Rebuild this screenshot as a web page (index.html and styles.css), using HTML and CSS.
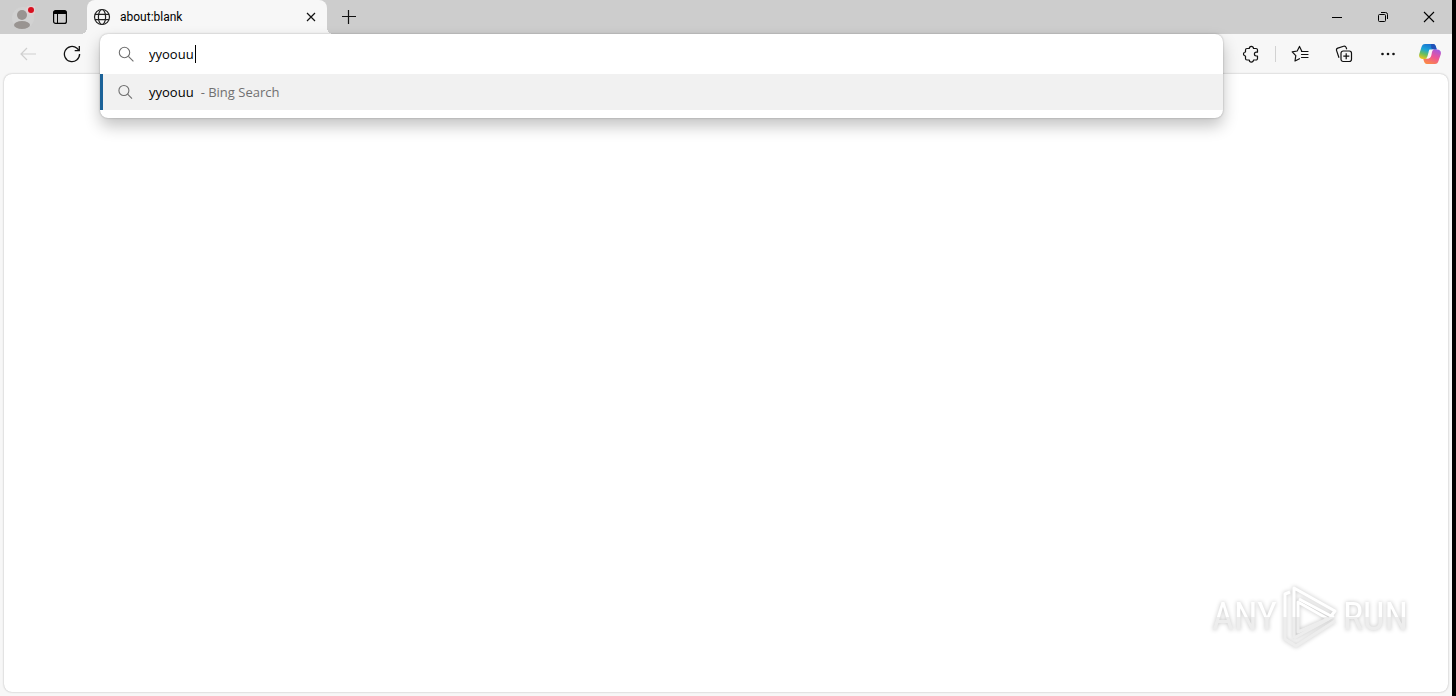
FILE: index.html
```html
<!DOCTYPE html>
<html lang="en">
<head>
  <meta charset="UTF-8">
  <meta name="viewport" content="width=device-width, initial-scale=1.0">
  <title>about:blank</title>
  <link rel="stylesheet" href="styles.css">
</head>
<body>
  <div class="browser">
    <header class="titlebar">
      <button class="profile" aria-label="Profile">
        <svg width="24" height="24" viewBox="0 0 24 24">
          <circle cx="12" cy="12" r="11" fill="#d2d2d2"/>
          <circle cx="11" cy="9" r="5" fill="#999491"/>
          <ellipse cx="11" cy="19" rx="8" ry="4" fill="#999491"/>
          <circle cx="20" cy="4" r="5" fill="#e2cfd0"/>
          <circle cx="20" cy="4" r="3" fill="#d80f1f"/>
        </svg>
      </button>
      <button class="tab-actions" aria-label="Tab actions menu">
        <svg width="16" height="16" viewBox="0 0 16 16">
          <rect x="1.6" y="1.6" width="12.8" height="12.8" rx="2" fill="none" stroke="#000" stroke-width="1.2"/>
          <path d="M1.5 5V3.5a2 2 0 0 1 2-2h9a2 2 0 0 1 2 2V5z"/>
          <path d="M5.5 5v9" stroke="#000"/>
        </svg>
      </button>
      <div class="tab">
        <svg width="18" height="18" viewBox="0 0 18 18" fill="none" stroke="#222" stroke-width="1.2">
          <circle cx="9" cy="9" r="7.5"/>
          <ellipse cx="9" cy="9" rx="3.6" ry="7.5"/>
          <path d="M2 6.4h14M2 11.6h14"/>
        </svg>
        <span class="tab-title">about:blank</span>
        <button class="tab-close" aria-label="Close tab">
          <svg width="10" height="10" viewBox="0 0 10 10" stroke="#111" stroke-width="1.2"><path d="M1 1l8 8M9 1L1 9"/></svg>
        </button>
      </div>
      <button class="new-tab" aria-label="New tab">
        <svg width="16" height="16" viewBox="0 0 16 16" stroke="#111" stroke-width="1.2"><path d="M1 7.5h14M7.5 1v14"/></svg>
      </button>
      <div class="window-controls">
        <button aria-label="Minimize">
          <svg width="12" height="12" viewBox="0 0 12 12" stroke="#000"><path d="M1 6.5h10"/></svg>
        </button>
        <button aria-label="Restore">
          <svg width="12" height="12" viewBox="0 0 12 12" fill="none" stroke="#000">
            <rect x="1.5" y="3.5" width="7" height="7" rx="1"/>
            <path d="M4 1.5h4.5a2 2 0 0 1 2 2V8"/>
          </svg>
        </button>
        <button aria-label="Close">
          <svg width="12" height="12" viewBox="0 0 12 12" stroke="#000" stroke-width="1.1"><path d="M1 1l10 10M11 1L1 11"/></svg>
        </button>
      </div>
    </header>

    <nav class="toolbar">
      <button class="tool" aria-label="Back" disabled>
        <svg width="18" height="18" viewBox="0 0 18 18" fill="none" stroke="#cfcfcf" stroke-width="1.2"><path d="M17 9H2M8 3L2 9l6 6"/></svg>
      </button>
      <button class="tool" aria-label="Refresh">
        <svg width="18" height="18" viewBox="0 0 18 18" fill="none" stroke="#111" stroke-width="1.3">
          <path d="M16.6 9A7.6 7.6 0 1 1 14 3.3L16 5.4"/>
          <path d="M16.3 1v4.6h-4.6"/>
        </svg>
      </button>

      <form class="address">
        <div class="omnibox">
          <label class="omnibox-input" for="query">
            <svg class="search-icon" width="16" height="16" viewBox="0 0 16 16" fill="none" stroke="#6f6f6f" stroke-width="1.1"><circle cx="6.5" cy="6.5" r="5.2"/><path d="M10.4 10.4l5 5"/></svg>
            <input type="text" id="query" name="query" value="yyoouu" aria-label="Search or enter web address" autocomplete="off">
            <span class="caret"></span>
          </label>
          <a class="suggestion" href="#">
            <svg class="search-icon" width="16" height="16" viewBox="0 0 16 16" fill="none" stroke="#6f6f6f" stroke-width="1.1"><circle cx="5.9" cy="6.5" r="5"/><path d="M9.6 10.2l4.400 4.400"/></svg>
            <span class="term">yyoouu</span>
            <span class="engine">- Bing Search</span>
          </a>
        </div>
      </form>

      <div class="tools">
        <button class="tool" aria-label="Extensions">
          <svg width="18" height="18" viewBox="0 0 18 18" fill="none" stroke="#111" stroke-width="1.2" stroke-linejoin="round">
            <path d="M5 3.500h2.300a2.100 2.100 0 0 1 4.200 0H14A1.500 1.500 0 0 1 15.500 5v2.200h-1.200a1.900 1.900 0 0 0 0 3.800h1.200v2.500A1.500 1.500 0 0 1 14 15h-2.500a2.100 2.100 0 0 1-4.200 0H5a1.500 1.500 0 0 1-1.500-1.500V11a2 2 0 0 1 0-4V5A1.500 1.500 0 0 1 5 3.500z"/>
          </svg>
        </button>
        <span class="divider"></span>
        <button class="tool" aria-label="Favorites">
          <svg width="18" height="18" viewBox="0 0 18 18" fill="none" stroke="#111" stroke-width="1.2" stroke-linejoin="round" stroke-linecap="round">
            <path d="M10.7 6L8.5 1.4 6.2 6l-5 .9 3.6 3.7L4 16l4.5-2.3"/>
            <path d="M10.5 6.5H17M10.5 9.5H17M10.5 12.5H17"/>
          </svg>
        </button>
        <button class="tool" aria-label="Collections">
          <svg width="18" height="18" viewBox="0 0 18 18" fill="none" stroke="#111" stroke-width="1.2" stroke-linejoin="round">
            <path d="M4 12.8L1.6 5.6a2 2 0 0 1 1.2-2.5l5.8-1.9a2 2 0 0 1 2.5 1.2l.6 1.8"/>
            <rect x="6" y="6" width="10.5" height="10.5" rx="2.2"/>
            <path d="M11.2 8.3v6M8.3 11.2h6"/>
          </svg>
        </button>
        <button class="tool" aria-label="Settings and more">
          <svg width="18" height="18" viewBox="0 0 18 18" fill="#111"><circle cx="3.5" cy="9" r="1.3"/><circle cx="9" cy="9" r="1.3"/><circle cx="14.5" cy="9" r="1.3"/></svg>
        </button>
        <button class="tool copilot" aria-label="Copilot">
          <svg width="22" height="20" viewBox="0 0 22 20">
            <defs>
              <linearGradient id="cool" x1="0.6" y1="0" x2="0.2" y2="1">
                <stop offset="0" stop-color="#1b6fd0"/>
                <stop offset="0.4" stop-color="#1ba5d8"/>
                <stop offset="0.7" stop-color="#6cbf5a"/>
                <stop offset="1" stop-color="#f2c51d"/>
              </linearGradient>
              <linearGradient id="warm" x1="0.8" y1="0" x2="0.3" y2="1">
                <stop offset="0" stop-color="#a558e0"/>
                <stop offset="0.5" stop-color="#ee5595"/>
                <stop offset="1" stop-color="#fb8a45"/>
              </linearGradient>
            </defs>
            <path d="M6 0h8c2 0 2.500 1.500 3 3l.7 2.500h-3c-2 0-3 1-3.600 3L9.700 13c-.5 1.500-1.400 2-3 2H4c-3 0-4.500-2-3.700-5L2.500 3C3.200 1 4 0 6 0z" fill="url(#cool)"/>
            <path d="M12 0h2c2 0 2.500 1.500 3 3l.7 2.500h-3c-1.300 0-2-.5-2.500-2z" fill="#2052b8"/>
            <path d="M16 20H8c-2 0-2.700-1.500-3.100-3l-.6-2h3c2 0 3-1 3.600-3l1.400-4.500c.5-1.500 1.400-2 3-2H18c3 0 4.500 2 3.700 5l-2.200 6.500c-.7 2-1.500 3-3.500 3z" fill="url(#warm)"/>
            <path d="M10.500 5.500h4.500c-1.300.4-1.700 1.400-2 2.500l-.7 3.500c-.5 2-1.800 3-3.300 3H6.500c1.300-.5 1.700-1.500 2-2.500l1-3.500c.3-1.200.5-2.500 1-3z" fill="#fbf4f5"/>
          </svg>
        </button>
      </div>
    </nav>

    <main class="page">
      <div class="watermark">
        <span>ANY</span>
        <svg width="60" height="66" viewBox="0 0 60 66" fill="none" stroke-linejoin="round">
          <defs>
            <linearGradient id="fade" x1="0" y1="0" x2="0" y2="66" gradientUnits="userSpaceOnUse">
              <stop offset="0.5" stop-color="#fff"/>
              <stop offset="0.5" stop-color="#ededed"/>
            </linearGradient>
          </defs>
          <g stroke="url(#fade)" stroke-width="3">
            <path d="M10 8L5 10v45l11 7L55 37"/>
            <path d="M14 54V4l41 23-4 5L19 15"/>
            <path d="M18 48V18l30 17z"/>
            <path d="M14 54l40-22"/>
          </g>
        </svg>
        <span>RUN</span>
      </div>
    </main>
  </div>
</body>
</html>
```

FILE: styles.css
```css
* {
  box-sizing: border-box;
}

body {
  margin: 0;
  background-color: #000;
  font-family: "Open Sans", "Noto Sans", sans-serif;
  font-size: 13px;
  color: #000;
}

button {
  display: flex;
  align-items: center;
  justify-content: center;
  padding: 0;
  border: none;
  background: none;
}

.browser {
  display: flex;
  flex-direction: column;
  height: 100vh;
  margin-right: 4px;
  background-color: #f7f7f7;
}

.titlebar {
  display: flex;
  height: 34px;
  padding-left: 11px;
  background-color: #cdcdcd;
}

.profile {
  width: 24px;
}

.profile svg {
  margin-top: 2px;
}

.tab-actions {
  width: 52px;
  padding-right: 2px;
}

.tab {
  position: relative;
  display: flex;
  align-items: center;
  width: 240px;
  padding: 0 10px 0 6px;
  border-radius: 8px 8px 0 0;
  background-color: #f7f7f7;
}

/* curved feet of the active tab */
.tab::before,
.tab::after {
  content: "";
  position: absolute;
  bottom: 0;
  width: 6px;
  height: 6px;
}

.tab::before {
  right: 100%;
  background: radial-gradient(circle at 0 0, transparent 6px, #f7f7f7 6px);
}

.tab::after {
  left: 100%;
  background: radial-gradient(circle at 100% 0, transparent 6px, #f7f7f7 6px);
}

.tab-title {
  flex: 1;
  margin-left: 9px;
  font-family: Roboto, "Open Sans", sans-serif;
  font-size: 12px;
}

.tab-close {
  width: 12px;
  height: 16px;
}

.new-tab {
  width: 44px;
}

.window-controls {
  display: flex;
  margin-left: auto;
}

.window-controls button {
  width: 46px;
}

.toolbar {
  display: flex;
  align-items: center;
  height: 40px;
  padding: 0 2px 0 6px;
}

.tool {
  width: 44px;
  height: 32px;
}

.copilot {
  width: 40px;
}

.address {
  position: relative;
  flex: 1;
  align-self: stretch;
  margin: 0 6px;
}

.omnibox {
  position: absolute;
  top: 0;
  left: 0;
  right: 0;
  z-index: 1;
  padding-bottom: 8px;
  border-radius: 8px;
  background-color: #fff;
  box-shadow: 0 0 2px rgba(0, 0, 0, 0.3), 0 8px 16px rgba(0, 0, 0, 0.24);
}

.omnibox-input {
  display: flex;
  align-items: center;
  height: 40px;
  padding-left: 18px;
}

.omnibox-input input {
  field-sizing: content;
  padding: 0;
  border: none;
  outline: none;
  background: none;
  font: inherit;
}

.caret {
  width: 1px;
  height: 18px;
  margin-left: 1px;
  background-color: #000;
}

.suggestion {
  display: flex;
  align-items: center;
  height: 36px;
  padding-left: 15px;
  border-left: 3px solid #1b6298;
  background-color: #f1f1f1;
  color: #000;
  text-decoration: none;
}

.search-icon {
  margin-right: 15px;
}

.engine {
  margin-left: 7px;
  color: #707070;
}

.tools {
  display: flex;
  align-items: center;
}

.divider {
  width: 1px;
  height: 16px;
  margin: 0 2px;
  background-color: #d2d2d2;
}

.page {
  position: relative;
  flex: 1;
  margin: 0 4px 4px;
  border-radius: 8px;
  background-color: #fff;
  box-shadow: 0 0 2px rgba(0, 0, 0, 0.3);
}

.watermark {
  position: absolute;
  right: 40px;
  bottom: 42px;
  display: flex;
  align-items: center;
  gap: 3px;
  font-family: "Roboto Condensed", Roboto, sans-serif;
  font-size: 38px;
  line-height: 44px;
  filter: drop-shadow(0 0 2px rgba(0, 0, 0, 0.24));
}

.watermark span {
  background: linear-gradient(#fff 50%, #ededed 50%);
  background-clip: text;
  color: transparent;
}
```
